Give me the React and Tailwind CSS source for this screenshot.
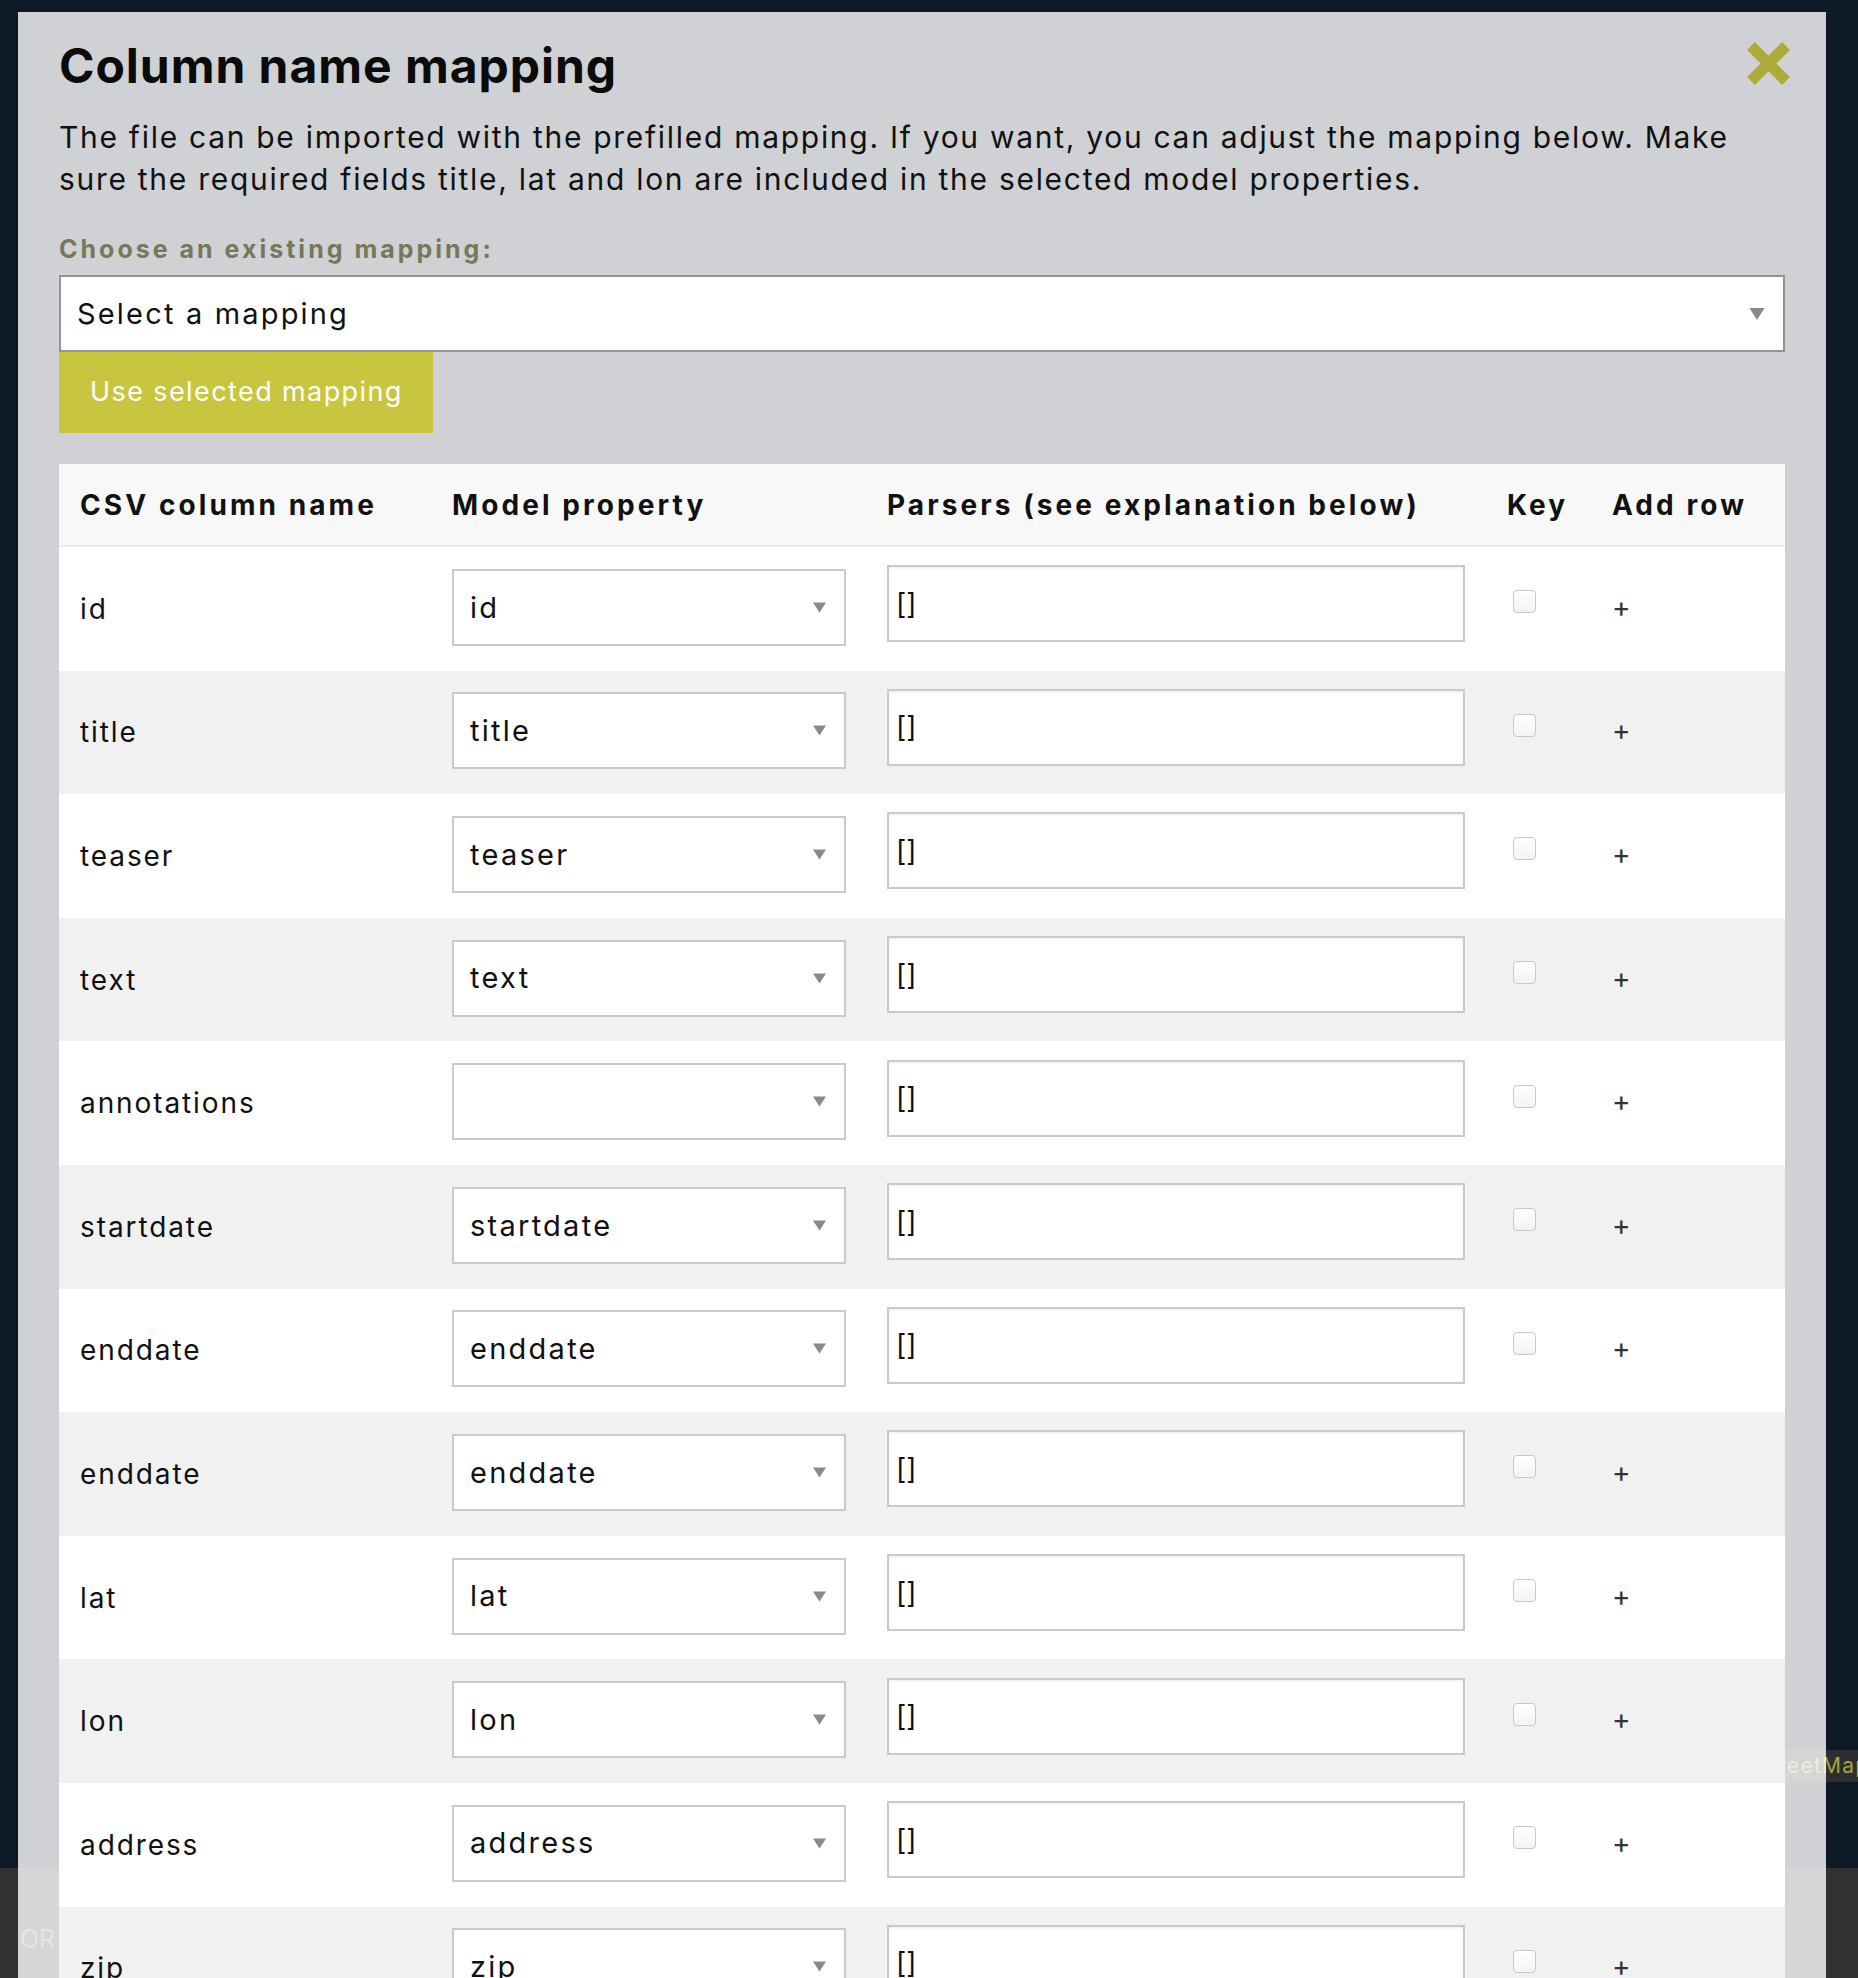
import React from "react";

const rows = [
  ["id", "id"],
  ["title", "title"],
  ["teaser", "teaser"],
  ["text", "text"],
  ["annotations", ""],
  ["startdate", "startdate"],
  ["enddate", "enddate"],
  ["enddate", "enddate"],
  ["lat", "lat"],
  ["lon", "lon"],
  ["address", "address"],
  ["zip", "zip"],
  ["city", "city"],
];

function Caret({ className }) {
  return (
    <svg viewBox="0 0 14 11" className={className}>
      <path d="M0 0h14L7 11z" fill="currentColor" />
    </svg>
  );
}

function CloseIcon() {
  return (
    <svg viewBox="0 0 45 45" className="w-[45px] h-[45px] text-[#acab3a]">
      <path d="M5 5L40 40M40 5L5 40" stroke="currentColor" strokeWidth="11" />
    </svg>
  );
}

function MappingRow({ csv, model, index }) {
  return (
    <div
      className={`grid grid-cols-[372px_435px_620px_105px_1fr] h-[123.6px] items-center ${
        index % 2 ? "bg-[#f1f1f1]" : "bg-white"
      }`}
    >
      <div className="pl-[21px] text-[28px] leading-[34px] tracking-[0.068em] text-[#111]">{csv}</div>
      <div className="pl-[21px] pr-5">
        <div className="h-[77px] mb-[3px] border-2 border-[#cacaca] bg-white flex items-center justify-between pl-4 pr-[18px]">
          <span className="text-[29px] tracking-[0.078em] text-[#111]">{model}</span>
          <Caret className="w-[13px] h-[11px] text-[#8a8a8a]" />
        </div>
      </div>
      <div className="px-[21px]">
        <div className="h-[77px] mb-[10px] border-2 border-[#cacaca] bg-white shadow-[inset_0_1px_3px_rgba(0,0,0,0.08)] flex items-center pl-[7px] text-[28px] text-[#111]">
          []
        </div>
      </div>
      <div className="pl-[27px]">
        <span className="block w-[23px] h-[23px] mb-[14px] rounded-[4px] border border-[#c8c8c8] bg-gradient-to-b from-white to-[#f3f3f3]" />
      </div>
      <div className="pl-[21px] mb-[4px] text-[28px] leading-[34px] text-[#333]">+</div>
    </div>
  );
}

export default function App() {
  return (
    <div className="relative h-[1978px] overflow-hidden bg-[#0e1926] font-['Inter',sans-serif]">
      {/* page below the modal */}
      <div className="relative h-[1868px]">
        <div className="absolute top-[1750px] left-[1600px] w-[400px] h-[32px] bg-[#2b2f33] flex items-center pl-[69px] text-[21px] tracking-[0.06em] text-[#a5a53a] whitespace-nowrap">
          © OpenStreetMap contributors
        </div>
      </div>
      <div className="h-[110px] bg-[#313131] pl-[20px] pt-[56px] text-[25px] leading-[30px] text-[#828282]">
        OR
      </div>

      {/* modal */}
      <div className="absolute left-[18px] top-[12px] w-[1808px] bg-white/80 px-[41px] pt-[30px] pb-10">
        <button className="absolute top-[29px] right-[35px]">
          <CloseIcon />
        </button>
        <h1 className="text-[48px] leading-[48px] font-bold text-[#0b0b0b] tracking-[0.02em]">Column name mapping</h1>
        <p className="mt-[26px] text-[30px] leading-[42px] text-[#111] tracking-[0.057em]">
          The file can be imported with the prefilled mapping. If you want, you can adjust the mapping below. Make
          <br />
          sure the required fields title, lat and lon are included in the selected model properties.
        </p>
        <label className="block mt-[34px] text-[25px] leading-[30px] font-bold text-[#77775a] tracking-[0.12em]">
          Choose an existing mapping:
        </label>
        <div className="mt-[11px] h-[77px] border-2 border-[#949494] bg-white flex items-center justify-between pl-4 pr-[18px]">
          <span className="text-[29px] tracking-[0.075em] text-[#111]">Select a mapping</span>
          <Caret className="w-[16px] h-[12px] text-[#8a8a8a]" />
        </div>
        <button className="block w-[374px] h-[81px] bg-[#c8c63f] text-left pl-[31px] text-[27px] text-white tracking-[0.052em]">
          Use selected mapping
        </button>

        <div className="mt-[31px] bg-white">
          <div className="grid grid-cols-[372px_435px_620px_105px_1fr] h-[83px] items-center bg-[#f8f8f8] border-b-2 border-[#ebebeb] text-[28px] font-bold text-[#111] tracking-[0.11em]">
            <div className="pl-[21px]">CSV column name</div>
            <div className="pl-[21px]">Model property</div>
            <div className="pl-[21px]">Parsers (see explanation below)</div>
            <div className="pl-[21px]">Key</div>
            <div className="pl-[21px]">Add row</div>
          </div>
          {rows.map(([csv, model], i) => (
            <MappingRow key={i} csv={csv} model={model} index={i} />
          ))}
        </div>
      </div>
    </div>
  );
}
